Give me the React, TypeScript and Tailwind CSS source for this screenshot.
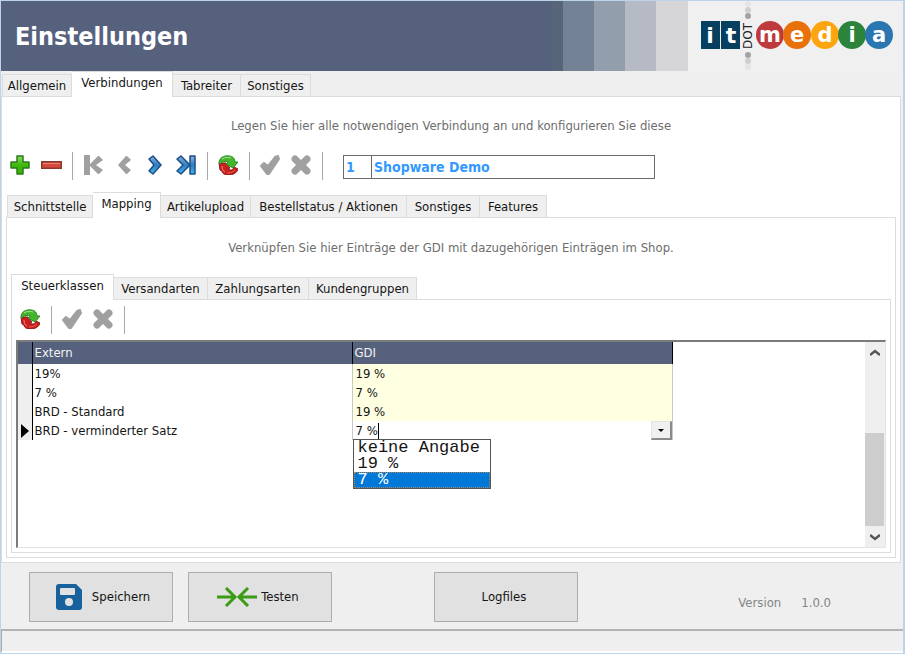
import { useState } from 'react';
import type { ReactNode } from 'react';
import clsx from 'clsx';

type Tab = { name: string; width: string };

const mainTabs: Tab[] = [
  { name: 'Allgemein', width: 'w-[70px]' },
  { name: 'Verbindungen', width: 'w-[101px]' },
  { name: 'Tabreiter', width: 'w-[68px]' },
  { name: 'Sonstiges', width: 'w-[70px]' },
];

const connectionTabs: Tab[] = [
  { name: 'Schnittstelle', width: 'w-[86px]' },
  { name: 'Mapping', width: 'w-[68px]' },
  { name: 'Artikelupload', width: 'w-[90px]' },
  { name: 'Bestellstatus / Aktionen', width: 'w-[156px]' },
  { name: 'Sonstiges', width: 'w-[73px]' },
  { name: 'Features', width: 'w-[67px]' },
];

const mappingTabs: Tab[] = [
  { name: 'Steuerklassen', width: 'w-[103px]' },
  { name: 'Versandarten', width: 'w-[94px]' },
  { name: 'Zahlungsarten', width: 'w-[101px]' },
  { name: 'Kundengruppen', width: 'w-[108px]' },
];

const rows = [
  { extern: '19%', gdi: '19 %' },
  { extern: '7 %', gdi: '7 %' },
  { extern: 'BRD - Standard', gdi: '19 %' },
];

const options = ['keine Angabe', '19 %', '7 %'];

const logoLetters = [
  { letter: 'm', x: 69, fill: '#be3a3c' },
  { letter: 'e', x: 96, fill: '#e8710c' },
  { letter: 'd', x: 124, fill: '#fca510' },
  { letter: 'i', x: 151, fill: '#2c833c' },
  { letter: 'a', x: 178, fill: '#2a76b0' },
];

const Logo = () => (
  <svg width="194" height="69" viewBox="0 0 194 69" role="img" aria-label="it dot media">
    <rect x="0" y="20" width="19" height="28" fill="#063f60" />
    <rect x="20" y="20" width="19" height="28" fill="#063f60" />
    <g fill="#fff" fontFamily="'DejaVu Sans'" fontWeight="bold" fontSize="22" textAnchor="middle">
      <text x="9" y="42">i</text>
      <text x="30" y="42">t</text>
    </g>
    <circle cx="47" cy="3" r="3" fill="#e4e4e4" />
    <circle cx="47" cy="9" r="3" fill="#cfcfcf" />
    <circle cx="47" cy="15" r="3" fill="#a3a3a3" />
    <circle cx="47" cy="54" r="3" fill="#a3a3a3" />
    <circle cx="47" cy="60" r="3" fill="#cfcfcf" />
    <circle cx="47" cy="66" r="3" fill="#e4e4e4" />
    <text transform="translate(51 48) rotate(-90)" fontFamily="'DejaVu Sans'" fontSize="12" fill="#222">DOT</text>
    {logoLetters.map(({ letter, x, fill }) => (
      <g key={letter}>
        <circle cx={x} cy="34" r="14" fill={fill} />
        <text x={x} y="41" fill="#fff" fontFamily="'DejaVu Sans'" fontWeight="bold" fontSize="21" textAnchor="middle">
          {letter}
        </text>
      </g>
    ))}
  </svg>
);

const PlusIcon = () => (
  <svg width="20" height="20" viewBox="0 0 20 20">
    <defs>
      <linearGradient id="plus" x1="0" y1="0" x2="0" y2="1">
        <stop offset="0" stopColor="#8ade5c" />
        <stop offset="0.5" stopColor="#3fb70e" />
        <stop offset="1" stopColor="#36b400" />
      </linearGradient>
    </defs>
    <path d="M7 1h6v6h6v6h-6v6H7v-6H1V7h6z" fill="url(#plus)" stroke="#2d7a1c" strokeWidth="1.5" strokeLinejoin="round" />
  </svg>
);

const MinusIcon = () => (
  <svg width="21" height="20" viewBox="0 0 21 20">
    <rect x="0.75" y="6.75" width="19.5" height="6.5" fill="#d9483e" stroke="#8a3a2c" strokeWidth="1.5" />
    <path d="M2 8.500h17" stroke="#e58572" />
  </svg>
);

const FirstIcon = () => (
  <svg width="20" height="20" viewBox="0 0 20 20" fill="#a0a0a0">
    <path d="M1 0h6v20H1z" />
    <path d="M15 1h1l4 4-7 5 7 5-4 4h-1l-9-9z" />
  </svg>
);

const PrevIcon = () => (
  <svg width="20" height="20" viewBox="0 0 20 20" fill="#a0a0a0">
    <path d="M12 1h1l4 4-6 5 6 5-4 4h-1l-8-9z" />
  </svg>
);

const BlueGradient = ({ id }: { id: string }) => (
  <defs>
    <linearGradient id={id} x1="0" y1="0" x2="0" y2="1">
      <stop offset="0" stopColor="#8fb0d8" />
      <stop offset="0.5" stopColor="#2f7fc4" />
      <stop offset="1" stopColor="#45b4ee" />
    </linearGradient>
  </defs>
);

const NextIcon = () => (
  <svg width="20" height="20" viewBox="0 0 20 20">
    <BlueGradient id="next" />
    <path d="M4 4l4-3 8 9-8 9-4-3 5-6z" fill="url(#next)" stroke="#1c4f86" strokeWidth="1.5" strokeLinejoin="round" />
  </svg>
);

const LastIcon = () => (
  <svg width="20" height="20" viewBox="0 0 20 20">
    <BlueGradient id="last" />
    <g fill="url(#last)" stroke="#1c4f86" strokeWidth="1.5" strokeLinejoin="round">
      <path d="M1 4l4-3 9 9-9 9-4-3 6-6z" />
      <path d="M14 1h5v18h-5z" />
    </g>
  </svg>
);

const RefreshIcon = () => (
  <svg width="20" height="20" viewBox="0 0 20 20">
    <path
      d="M1 8h7l4 5-2 1c3 2 5 1 6-2l4 2c-1 4-5 6-10 6-4 0-6-2-6-4l-2-1z"
      fill="#c9201f"
      stroke="#8a1a1a"
      strokeLinejoin="round"
    />
    <path d="M4 11c0 3 1 5 3 6" fill="none" stroke="#ee8a7c" />
    <path d="M9 18c3 0 6-1 8-3" fill="none" stroke="#e8604f" />
    <path
      d="M1 8c0-5 5-8 10-7 4 0 6 3 6 6h3l-5 6-7-4 2-2C8 6 4 6 2 9z"
      fill="#45b52c"
      stroke="#2f8a28"
      strokeLinejoin="round"
    />
    <path d="M4 4c3-2 6-2 9-1" fill="none" stroke="#a5e58a" />
  </svg>
);

const CheckIcon = () => (
  <svg width="20" height="20" viewBox="0 0 20 20" fill="#a0a0a0" stroke="#a0a0a0" strokeWidth="2" strokeLinejoin="round">
    <path d="M1 11l3-3 4 3 7-9 3-1 1 3-10 15H7z" />
  </svg>
);

const CrossIcon = () => (
  <svg width="21" height="20" viewBox="0 0 21 20" stroke="#a0a0a0" strokeWidth="7" strokeLinecap="round">
    <path d="M4 4l12 12M16 4L4 16" />
  </svg>
);

const SaveIcon = () => (
  <svg width="26" height="26" viewBox="0 0 26 26">
    <path d="M3 0h17l6 6v17a3 3 0 0 1-3 3H3a3 3 0 0 1-3-3V3a3 3 0 0 1 3-3z" fill="#17619c" />
    <rect x="4" y="4" width="15" height="7" rx="1" fill="#e1e1e1" />
    <circle cx="13" cy="18" r="4" fill="#e1e1e1" />
  </svg>
);

const TestIcon = () => (
  <svg width="40" height="20" viewBox="0 0 40 20" fill="none" stroke="#3a9b14" strokeWidth="3">
    <path d="M0 10h19M9 1l9 9-9 9M40 10H21M31 1l-9 9 9 9" />
  </svg>
);

const Tabs = ({ label, tabs, initial }: { label: string; tabs: Tab[]; initial: string }) => {
  const [active, setActive] = useState(initial);

  return (
    <div role="tablist" aria-label={label} className="relative z-10 -mb-px flex items-end">
      {tabs.map(({ name, width }) => (
        <button
          key={name}
          type="button"
          role="tab"
          aria-selected={name === active}
          onClick={() => setActive(name)}
          className={clsx(
            'border-t border-r border-[#dcdcdc] whitespace-nowrap first:border-l',
            width,
            name === active ? 'h-[26px] bg-white pb-1' : 'h-[23px] border-b bg-[#efefef]',
          )}
        >
          {name}
        </button>
      ))}
    </div>
  );
};

const ToolButton = ({ label, disabled, children }: { label: string; disabled?: boolean; children: ReactNode }) => (
  <button type="button" aria-label={label} disabled={disabled} className="w-[31px] pb-[2px]">
    {children}
  </button>
);

const Separator = () => <span className="mr-[10px] h-7 w-px bg-[#a8a8a8]" />;

const ActionButton = ({ children }: { children: ReactNode }) => (
  <button type="button" className="flex h-[50px] w-36 items-center justify-center border border-[#adadad] bg-[#e1e1e1]">
    {children}
  </button>
);

const MappingTable = () => {
  const [value, setValue] = useState('7 %');

  return (
    <table className="w-[654px] table-fixed border-collapse self-start text-left">
      <colgroup>
        <col className="w-[14px]" />
        <col className="w-80" />
        <col className="w-80" />
      </colgroup>
      <thead>
        <tr className="h-[22px] bg-[#56617e] text-[#f4f4f4]">
          <td className="border-r border-black" />
          <th className="border-r border-black px-[2px] py-0 font-normal">Extern</th>
          <th className="border-r border-black px-[2px] py-0 font-normal">GDI</th>
        </tr>
      </thead>
      <tbody>
        {rows.map((row) => (
          <tr key={row.extern} className="h-[19px]">
            <td className="border-r border-black bg-[#efefef] p-0" />
            <td className="px-[2px] py-0">{row.extern}</td>
            <td className="border-x border-[#c8c8c8] bg-[#ffffe1] px-[3px] py-0">{row.gdi}</td>
          </tr>
        ))}
        <tr className="h-[19px]">
          <td className="border-r border-black bg-[#efefef] p-0">
            <svg width="8" height="14" viewBox="0 0 8 14" className="ml-[3px]">
              <path d="M0 0l8 7-8 7z" />
            </svg>
          </td>
          <td className="px-[2px] py-0">BRD - verminderter Satz</td>
          <td className="relative border-x border-[#c8c8c8] p-0 pl-[3px]">
            <div className="flex h-[19px] items-center">
              <input
                aria-label="GDI"
                value={value}
                onChange={(e) => setValue(e.target.value)}
                className="field-sizing-content outline-none"
              />
              <span className="h-4 w-px bg-black" />
              <button
                type="button"
                aria-label="Auswahl"
                className="ml-auto flex h-[19px] w-[21px] items-center justify-center border-t border-l border-r-2 border-b-2 border-t-[#e3e3e3] border-r-[#8a8a8a] border-b-[#8a8a8a] border-l-[#e3e3e3] bg-[#f0f0f0]"
              >
                <svg width="6" height="3" viewBox="0 0 6 3">
                  <path d="M0 0h6L3 3z" />
                </svg>
              </button>
            </div>
            <ul
              role="listbox"
              aria-label="GDI"
              className="absolute top-[18px] left-0 w-[138px] border border-[#555] bg-white font-['Liberation_Mono',monospace] text-[17px] leading-4"
            >
              {options.map((option) => (
                <li
                  key={option}
                  role="option"
                  aria-selected={option === value}
                  onClick={() => setValue(option)}
                  className={clsx(
                    'h-4 pl-1',
                    option === value && 'bg-[#0078d7] text-white outline-1 -outline-offset-1 outline-dotted outline-[#b0855a]',
                  )}
                >
                  {option}
                </li>
              ))}
            </ul>
          </td>
        </tr>
      </tbody>
    </table>
  );
};

const Scrollbar = () => (
  <div className="flex w-5 flex-col items-center bg-[#efefef]">
    <button type="button" aria-label="Nach oben" className="flex h-[21px] items-center">
      <svg width="10" height="8" viewBox="0 0 10 8" fill="none" stroke="#555" strokeWidth="2.500">
        <path d="M0 6l5-4 5 4" />
      </svg>
    </button>
    <div className="flex w-full flex-1 flex-col justify-end pr-px">
      <div className="h-[93px] w-full bg-[#cdcdcd]" />
    </div>
    <button type="button" aria-label="Nach unten" className="flex h-[21px] items-center">
      <svg width="10" height="8" viewBox="0 0 10 8" fill="none" stroke="#555" strokeWidth="2.500">
        <path d="M0 2l5 4 5-4" />
      </svg>
    </button>
  </div>
);

const App = () => (
  <div className="flex min-h-screen flex-col border border-r-2 border-[#bcd3ea] bg-[#efefef] font-['DejaVu_Sans_Condensed','DejaVu_Sans',sans-serif] text-[13px] leading-[18px] text-[#151515]">
    <header className="flex h-[70px]">
      <div className="flex flex-1 items-center bg-[#56617e] pt-[2px] pl-[14px]">
        <h1 className="text-[25px] font-bold text-white">Einstellungen</h1>
      </div>
      <div className="w-[11px] bg-[#566578]" />
      <div className="w-[31px] bg-[#738294]" />
      <div className="w-[31px] bg-[#929eac]" />
      <div className="w-[31px] bg-[#b5bac5]" />
      <div className="w-8 bg-[#d6d6d8]" />
      <div className="w-[215px] bg-[#f0f0f0] pl-[13px]">
        <Logo />
      </div>
    </header>

    <main className="flex flex-1 flex-col pr-[2px]">
      <div className="pl-px">
        <Tabs label="Einstellungen" tabs={mainTabs} initial="Verbindungen" />
      </div>
      <section className="flex flex-1 flex-col border border-[#dcdcdc] bg-white px-1 pb-1">
        <p className="pt-5 text-center text-[#6d6d6d]">Legen Sie hier alle notwendigen Verbindung an und konfigurieren Sie diese</p>

        <div className="mt-[17px] mb-3 flex h-7 items-center pl-1">
          <ToolButton label="Neu"><PlusIcon /></ToolButton>
          <ToolButton label="Löschen"><MinusIcon /></ToolButton>
          <Separator />
          <ToolButton label="Erster" disabled><FirstIcon /></ToolButton>
          <ToolButton label="Zurück" disabled><PrevIcon /></ToolButton>
          <ToolButton label="Weiter"><NextIcon /></ToolButton>
          <ToolButton label="Letzter"><LastIcon /></ToolButton>
          <Separator />
          <ToolButton label="Aktualisieren"><RefreshIcon /></ToolButton>
          <Separator />
          <ToolButton label="Übernehmen" disabled><CheckIcon /></ToolButton>
          <ToolButton label="Verwerfen" disabled><CrossIcon /></ToolButton>
          <Separator />
          <div className="mt-[2px] ml-[10px] flex h-6 w-[312px] border border-[#6b6b6b] text-sm leading-[18px] font-bold text-[#3399ff]">
            <input aria-label="Nummer" defaultValue="1" className="w-7 border-r border-[#6b6b6b] pl-[2px] outline-none" />
            <input aria-label="Name" defaultValue="Shopware Demo" className="min-w-0 flex-1 pl-[2px] outline-none" />
          </div>
        </div>

        <div className="pl-px">
          <Tabs label="Verbindung" tabs={connectionTabs} initial="Mapping" />
        </div>
        <div className="flex flex-1 flex-col border border-[#dcdcdc] px-1 pb-1">
          <p className="pt-[21px] pb-[17px] text-center text-[#6d6d6d]">
            Verknüpfen Sie hier Einträge der GDI mit dazugehörigen Einträgen im Shop.
          </p>
          <Tabs label="Mapping" tabs={mappingTabs} initial="Steuerklassen" />
          <div className="flex flex-1 flex-col border border-[#dcdcdc] p-1 pt-0">
            <div className="my-[6px] flex h-7 items-center pl-1">
              <ToolButton label="Aktualisieren"><RefreshIcon /></ToolButton>
              <Separator />
              <ToolButton label="Übernehmen" disabled><CheckIcon /></ToolButton>
              <ToolButton label="Verwerfen" disabled><CrossIcon /></ToolButton>
              <Separator />
            </div>
            <div className="flex flex-1 justify-between border-t-2 border-r border-b border-l-2 border-t-[#7b7b7b] border-r-[#e3e3e3] border-b-[#e3e3e3] border-l-[#7b7b7b]">
              <MappingTable />
              <Scrollbar />
            </div>
          </div>
        </div>
      </section>
    </main>

    <footer>
      <div className="flex pt-[9px] pb-[7px] pl-7">
        <ActionButton>
          <SaveIcon />
          <span className="-mr-1 ml-[10px]">Speichern</span>
        </ActionButton>
        <span className="w-[15px]" />
        <ActionButton>
          <TestIcon />
          <span className="mr-1 ml-1">Testen</span>
        </ActionButton>
        <span className="w-[102px]" />
        <ActionButton><span className="mr-1">Logfiles</span></ActionButton>
        <p className="mt-[22px] mr-[72px] ml-auto flex gap-5 text-[#858585]">
          <span>Version</span>
          <span>1.0.0</span>
        </p>
      </div>
      <div className="h-6 border-t-2 border-b-2 border-l border-t-[#b4b4b4] border-b-white border-l-[#a8a8a8]" />
    </footer>
  </div>
);

export default App;
